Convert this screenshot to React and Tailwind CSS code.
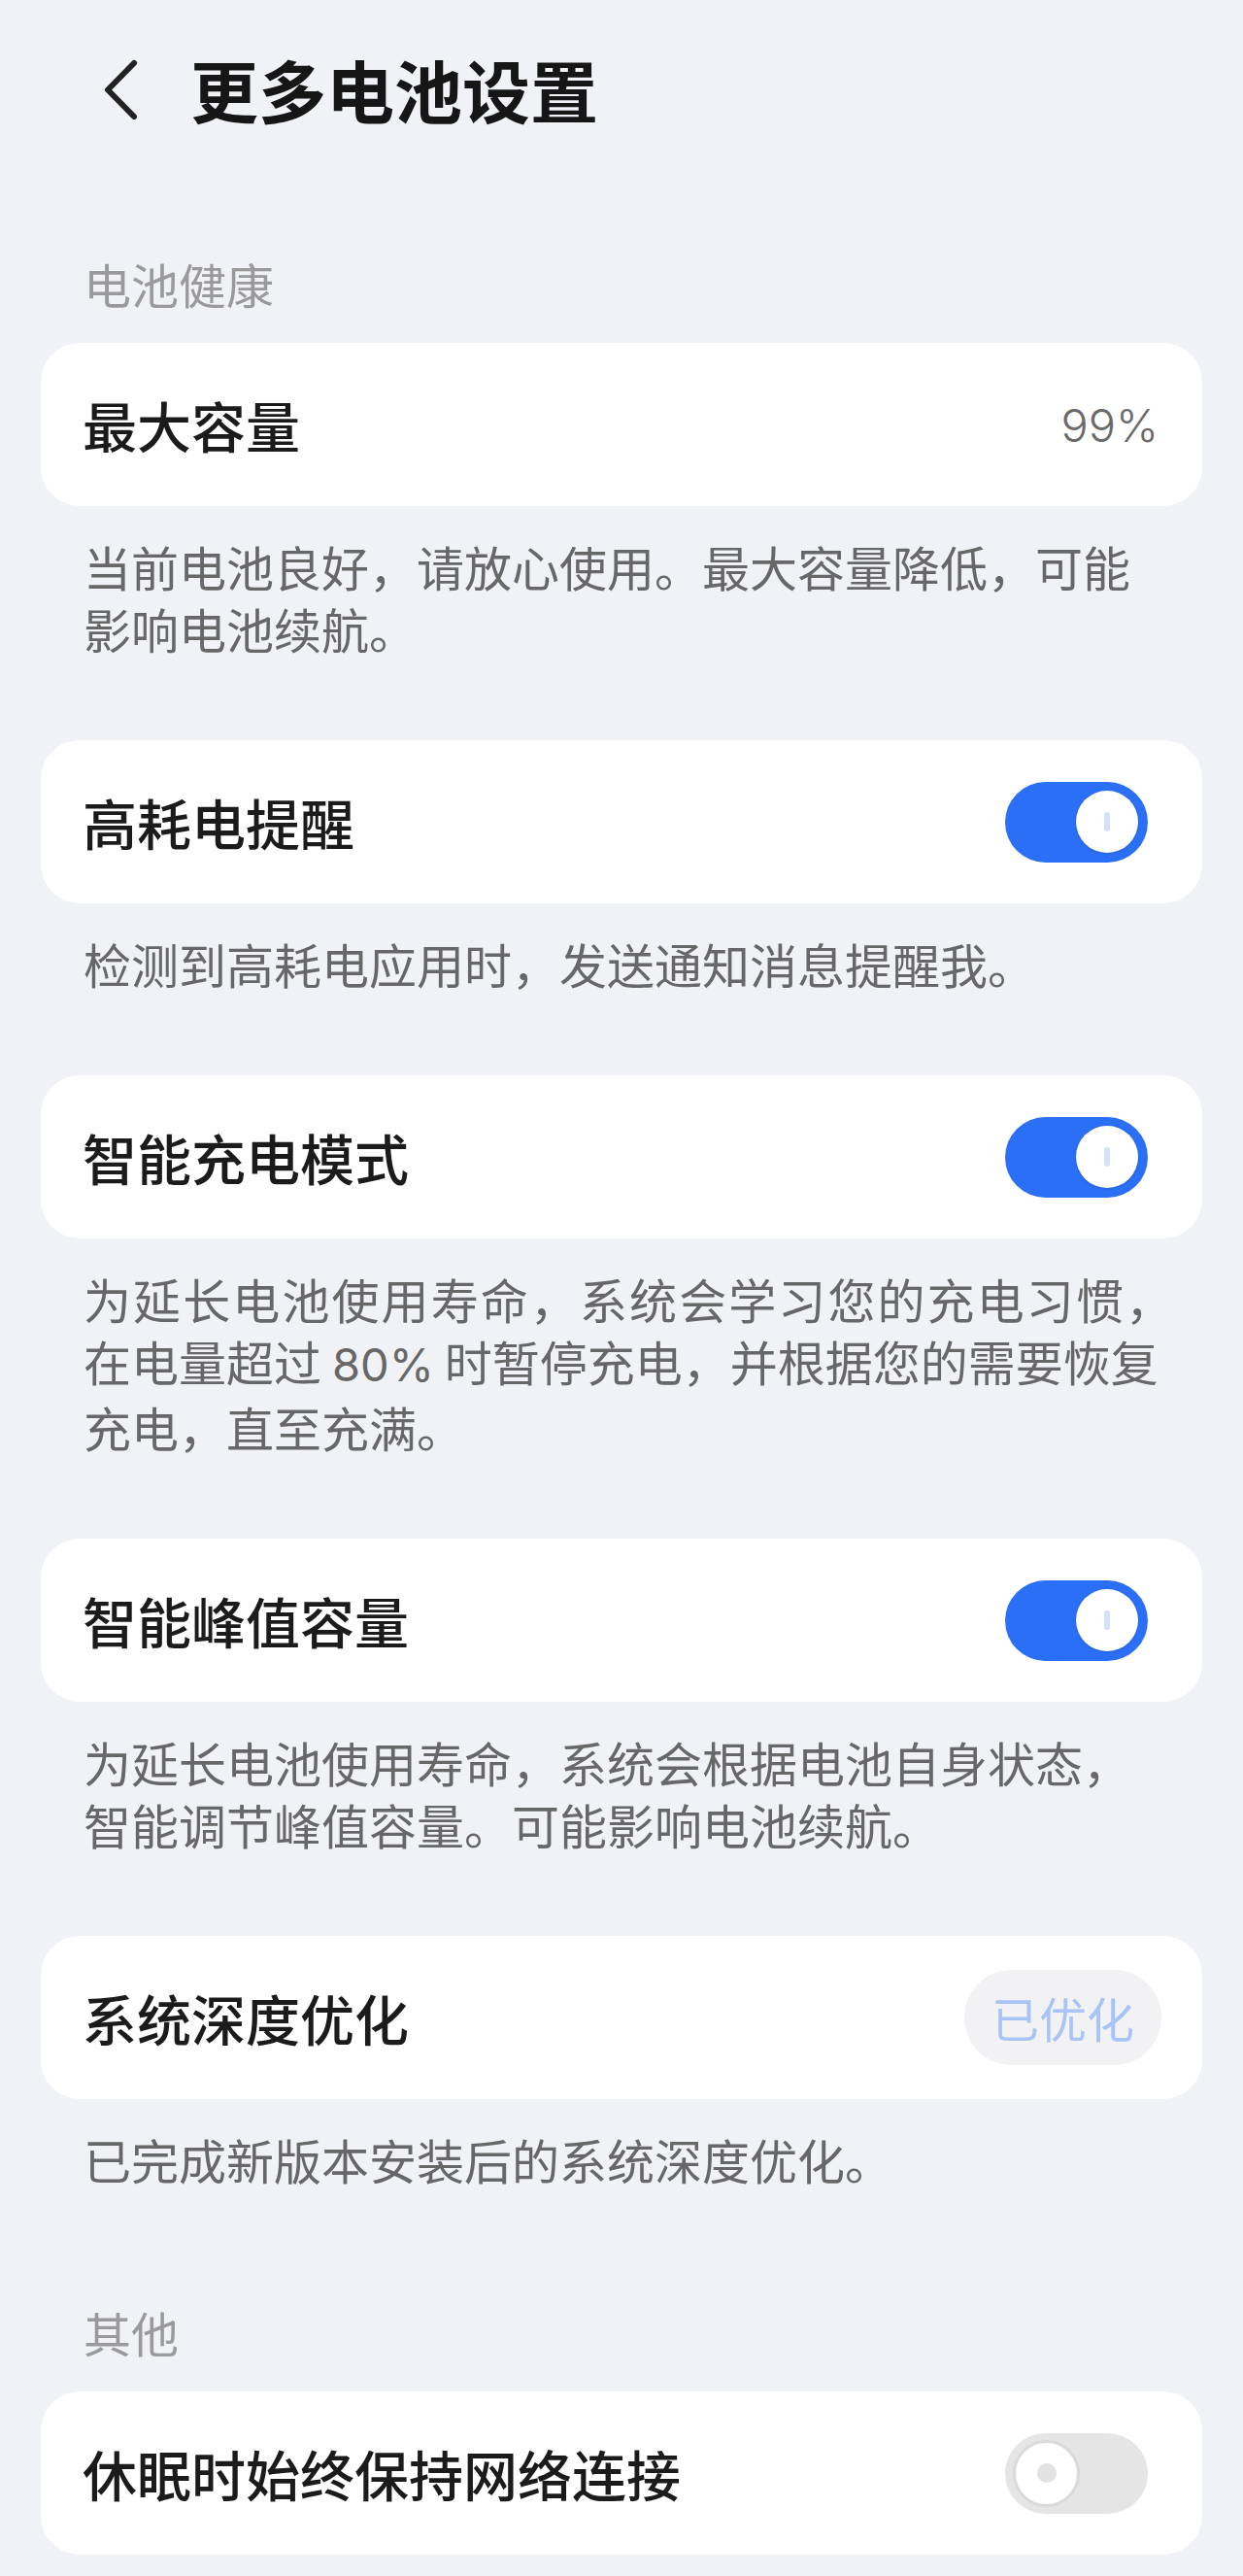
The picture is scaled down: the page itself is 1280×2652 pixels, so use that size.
import { useState } from 'react';

const sections = [
  {
    title: '电池健康',
    items: [
      {
        label: '最大容量',
        kind: 'value',
        value: '99%',
        desc: [['当前电池良好，请放心使用。最大容量降低，可能'], ['影响电池续航。']],
      },
      {
        label: '高耗电提醒',
        kind: 'toggle',
        on: true,
        desc: [['检测到高耗电应用时，发送通知消息提醒我。']],
      },
      {
        label: '智能充电模式',
        kind: 'toggle',
        on: true,
        desc: [
          ['为延长电池使用寿命，系统会学习您的充电习惯，', true],
          ['在电量超过 ', '80%', ' 时暂停充电，并根据您的需要恢复'],
          ['充电，直至充满。'],
        ],
      },
      {
        label: '智能峰值容量',
        kind: 'toggle',
        on: true,
        desc: [['为延长电池使用寿命，系统会根据电池自身状态，'], ['智能调节峰值容量。可能影响电池续航。']],
      },
      {
        label: '系统深度优化',
        kind: 'badge',
        value: '已优化',
        desc: [['已完成新版本安装后的系统深度优化。']],
      },
    ],
  },
  {
    title: '其他',
    items: [{ label: '休眠时始终保持网络连接', kind: 'toggle', on: false }],
  },
];

function Toggle({ initial }) {
  const [on, setOn] = useState(initial);

  if (on) {
    return (
      <button
        onClick={() => setOn(false)}
        className="w-[147px] h-[83px] rounded-full bg-[#2a6ff6] flex items-center justify-end pr-[10px] shrink-0"
      >
        <span className="w-[64px] h-[64px] rounded-full bg-white shadow-[0_1px_3px_rgba(0,0,0,0.12)] flex items-center justify-center">
          <span className="w-[6px] h-[20px] rounded-full bg-[#d4e1fb]" />
        </span>
      </button>
    );
  }

  return (
    <button
      onClick={() => setOn(true)}
      className="w-[147px] h-[83px] rounded-full bg-[#e5e5e5] flex items-center justify-start pl-[8px] shrink-0"
    >
      <span className="w-[69px] h-[69px] rounded-full bg-white border-[3px] border-[#dadada] flex items-center justify-center">
        <span className="w-[20px] h-[20px] rounded-full bg-[#e2e2e2]" />
      </span>
    </button>
  );
}

function DescLine({ parts }) {
  const justify = parts[1] === true;
  const pieces = justify ? [parts[0]] : parts;

  return (
    <div
      className={`whitespace-nowrap ${justify ? 'text-justify [text-align-last:justify]' : ''}`}
    >
      {pieces.map((p, i) =>
        /%/.test(p) ? (
          <span key={i} className="font-['Inter'] text-[47px]">
            {p}
          </span>
        ) : (
          <span key={i}>{p}</span>
        )
      )}
    </div>
  );
}

function Row({ item }) {
  return (
    <div>
      <div
        className={`h-[168px] rounded-[40px] bg-white flex items-center justify-between pl-[43px] ${
          item.kind === 'value' ? 'pr-[45px]' : item.kind === 'badge' ? 'pr-[42px]' : 'pr-[56px]'
        }`}
      >
        <span className="text-[56px] font-medium leading-none text-[#1b1b1b]">{item.label}</span>

        {item.kind === 'value' && (
          <span className="font-['Inter'] font-light text-[47px] leading-none text-[#6a6a6a]">
            {item.value}
          </span>
        )}
        {item.kind === 'toggle' && <Toggle initial={item.on} />}
        {item.kind === 'badge' && (
          <span className="w-[203px] h-[98px] rounded-full bg-[#f2f2f4] flex items-center justify-center text-[49px] text-[#a8c3f6]">
            {item.value}
          </span>
        )}
      </div>

      {item.desc && (
        <div className="pt-[30px] pb-[83px] pl-[44px] pr-[30px] text-[49px] leading-[64px] text-[#676767]">
          {item.desc.map((line, i) => (
            <DescLine key={i} parts={line} />
          ))}
        </div>
      )}
    </div>
  );
}

export default function App() {
  return (
    <div className="min-h-[2652px] bg-[#f1f2f6] font-['Noto_Sans_CJK_SC',sans-serif]">
      {/* Header */}
      <div className="h-[184px] flex items-center pl-[104px]">
        <svg width="44" height="72" viewBox="0 0 44 72" fill="none" className="shrink-0">
          <polyline
            points="34,9 7,36.5 34,64"
            stroke="#222"
            strokeWidth="6"
            strokeLinecap="round"
            strokeLinejoin="round"
          />
        </svg>
        <h1 className="ml-[48px] text-[70px] font-bold leading-none text-[#161616]">更多电池设置</h1>
      </div>

      <div className="px-[42px]">
        {sections.map((section, si) => (
          <div key={section.title}>
            <div
              className={`${si === 0 ? 'mt-[76px]' : 'mt-[31px]'} pl-[44px] text-[49px] leading-[64px] text-[#9a9a9a]`}
            >
              {section.title}
            </div>
            <div className="mt-[29px]">
              {section.items.map((item) => (
                <Row key={item.label} item={item} />
              ))}
            </div>
          </div>
        ))}
      </div>
    </div>
  );
}
